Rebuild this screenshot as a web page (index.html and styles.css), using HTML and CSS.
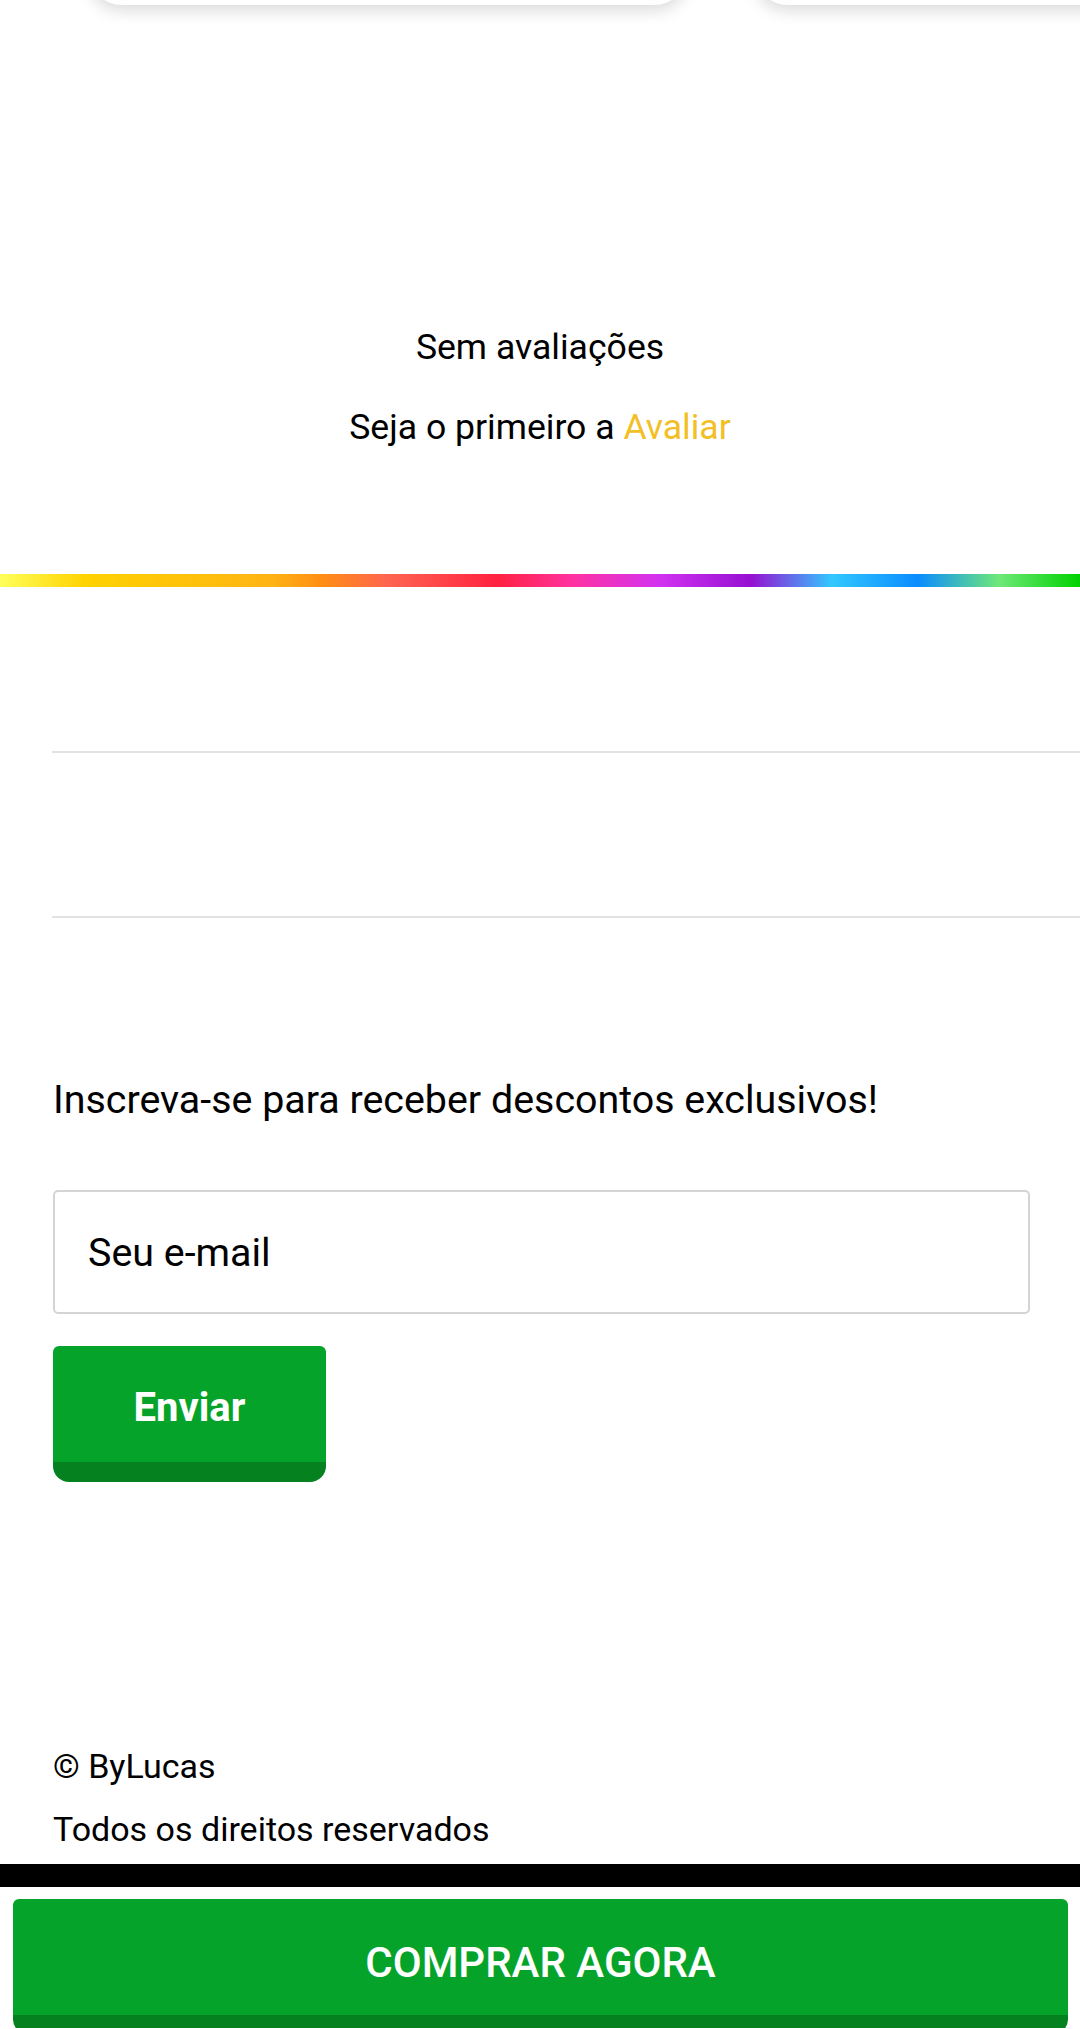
FILE: index.html
```html
<!DOCTYPE html>
<html lang="pt-BR">
<head>
<meta charset="utf-8">
<title>Loja</title>
<link rel="stylesheet" href="styles.css">
</head>
<body>
<div class="page">
  <div class="carousel">
    <div class="card"></div>
    <div class="card"></div>
  </div>

  <section class="reviews">
    <p class="reviews-empty">Sem avaliações</p>
    <p class="reviews-cta">Seja o primeiro a <a class="reviews-link" href="#">Avaliar</a></p>
  </section>

  <div class="rainbow"></div>

  <div class="accordion">
    <div class="acc-item acc-first"></div>
    <div class="acc-item"></div>
  </div>

  <section class="newsletter">
    <h2 class="newsletter-title">Inscreva-se para receber descontos exclusivos!</h2>
    <form class="newsletter-form">
      <input class="newsletter-input" type="email" placeholder="Seu e-mail">
      <button class="btn btn-send" type="button">Enviar</button>
    </form>
  </section>

  <footer class="footer">
    <p class="footer-line">© ByLucas</p>
    <p class="footer-line">Todos os direitos reservados</p>
  </footer>

  <div class="blackbar"></div>

  <div class="buybar">
    <button class="btn btn-buy" type="button">COMPRAR AGORA</button>
  </div>
</div>
</body>
</html>
```

FILE: styles.css
```css
* { box-sizing: border-box; }

html, body {
  margin: 0;
  padding: 0;
  background: #ffffff;
}

body {
  font-family: Roboto, "Liberation Sans", Arial, sans-serif;
  color: #000000;
}

.page {
  width: 1080px;
  height: 2029px;
  overflow: hidden;
}

/* top carousel remnants */
.carousel {
  height: 32px;
  overflow: hidden;
  display: flex;
  gap: 66px;
  padding-left: 88px;
}

.card {
  flex: 0 0 600px;
  height: 105px;
  margin-top: -100px;
  background: #ffffff;
  border-radius: 34px;
  box-shadow: 0 6px 16px rgba(0, 0, 0, 0.14);
}

/* reviews */
.reviews {
  text-align: center;
  padding-top: 293px;
}

.reviews-empty,
.reviews-cta {
  margin: 0;
  font-size: 35.6px;
  line-height: 44px;
}

.reviews-cta {
  margin-top: 36px;
}

.reviews-link {
  color: #f2bf26;
  text-decoration: none;
}

/* rainbow divider */
.rainbow {
  margin-top: 125px;
  height: 13px;
  background: linear-gradient(90deg,
    #ffff5a 0%,
    #ffd200 8%,
    #ffb414 25%,
    #ff8c14 30%,
    #ff6450 36%,
    #ff2240 46%,
    #ff32a0 53%,
    #d232f0 61%,
    #9610d2 69.5%,
    #32c8ff 77%,
    #0a8cff 85%,
    #6ee878 92.5%,
    #00d200 100%);
}

/* accordion (collapsed) */
.accordion {
  margin-left: 52px;
}

.acc-item {
  height: 165px;
  border-bottom: 2px solid #e2e2e2;
}

.acc-first {
  height: 166px;
}

/* newsletter */
.newsletter {
  padding: 158px 50px 0 53px;
}

.newsletter-title {
  margin: 0;
  font-size: 39.4px;
  font-weight: 400;
  line-height: 47px;
}

.newsletter-form {
  margin: 67px 0 0;
  display: flex;
  flex-direction: column;
  align-items: flex-start;
  gap: 32px;
}

.newsletter-input {
  width: 977px;
  height: 124px;
  border: 2px solid #d4d4d4;
  border-radius: 5px;
  padding: 0 0 0 33px;
  font-family: Roboto, "Liberation Sans", Arial, sans-serif;
  font-size: 39.4px;
  color: #000000;
  background: #ffffff;
  outline: none;
}

.newsletter-input::placeholder {
  color: #000000;
  opacity: 1;
}

.btn {
  border: none;
  border-bottom: 20px solid #05821f;
  background: #06a32a;
  color: #ffffff;
  font-family: Roboto, "Liberation Sans", Arial, sans-serif;
  font-weight: 700;
  cursor: pointer;
  padding: 0;
}

.btn-send {
  width: 273px;
  height: 136px;
  padding-top: 6px;
  font-size: 40px;
  border-radius: 6px 6px 16px 16px;
}

/* footer */
.footer {
  padding: 262px 53px 0;
}

.footer-line {
  margin: 0;
  font-size: 34px;
  line-height: 44px;
}

.footer-line + .footer-line {
  margin-top: 19px;
}

.blackbar {
  margin-top: 13px;
  height: 23px;
  background: #000000;
}

/* sticky buy bar */
.buybar {
  height: 141px;
  overflow: hidden;
  padding: 12px 12px 0 13px;
  background: #ffffff;
}

.btn-buy {
  display: block;
  width: 100%;
  height: 136px;
  padding-top: 10px;
  font-size: 42px;
  font-weight: 500;
  border-radius: 6px 6px 16px 16px;
}
```
